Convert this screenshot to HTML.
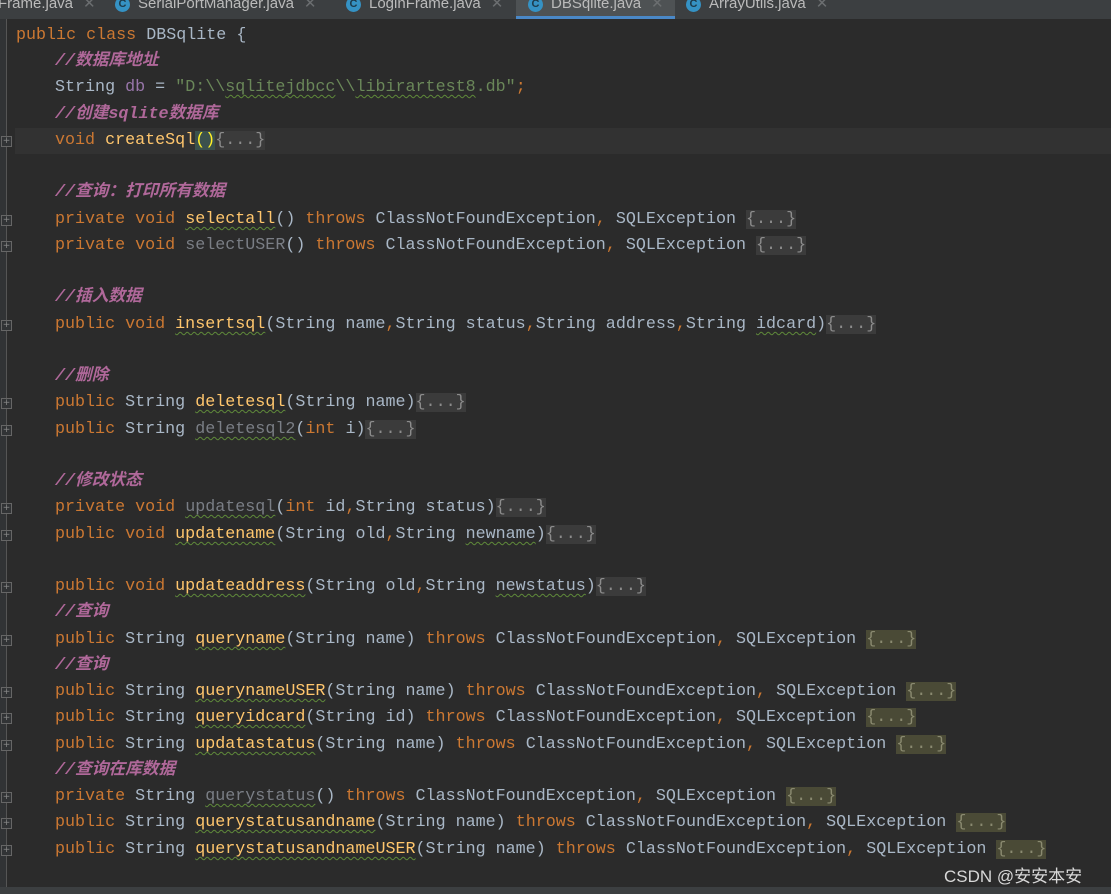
<!DOCTYPE html>
<html><head><meta charset="utf-8"><style>
body{margin:0;width:1111px;height:894px;background:#2b2b2b;overflow:hidden;position:relative;font-family:"Liberation Mono","Noto Sans CJK SC",monospace;}
.tabs{position:absolute;left:0;top:0;width:1111px;height:19px;background:#3c3f41;overflow:hidden;font-family:"Liberation Sans","Noto Sans CJK SC",sans-serif;font-size:15px;color:#bbb;}
.tab{position:absolute;top:-6px;height:25px;line-height:20px;white-space:nowrap}
.ci{display:inline-block;width:15px;height:15px;border-radius:50%;background:#3592c4;color:#1d3a4a;font-size:11px;line-height:15px;text-align:center;vertical-align:middle;margin-right:8px;font-weight:bold}
.x{color:#6b6e70;margin-left:10px}
.act{position:absolute;left:516px;top:0;width:159px;height:16px;background:#4e5254;border-bottom:3px solid #4a88c7}
.gut{position:absolute;left:0;top:19px;width:6px;height:868px;background:#313335;border-right:1px solid #555}
.bot{position:absolute;left:0;top:887px;width:1111px;height:7px;background:#3c3f41}
.cur{position:absolute;left:15px;top:128px;width:1096px;height:26px;background:#323232}
.l{position:absolute;left:15px;height:26px;line-height:26px;font-size:16.7px;color:#a9b7c6;white-space:pre}
.k{color:#cc7832}.m{color:#ffc66d;text-decoration:underline wavy #5f8a3a;text-underline-offset:3px;text-decoration-thickness:1px}
.g{color:#7a7e85;text-decoration:underline wavy #5f8a3a;text-underline-offset:3px;text-decoration-thickness:1px}
.s{color:#6a8759}.su{text-decoration:underline wavy #5f8a3a;text-underline-offset:3px;text-decoration-thickness:1px}
.v{color:#9876aa}.c{color:#b0689a;font-style:italic;font-weight:bold}
.f{background:#3b3b3b;color:#8c8c8c}.fy{background:#4a4a36;color:#8a8a70}
.fb{position:absolute;left:1px;width:9px;height:9px;border:1px solid #666;background:#313335;color:#888;font-size:9px;line-height:9px;text-align:center;font-family:"DejaVu Sans",sans-serif}
.u{text-decoration:underline wavy #5f8a3a;text-underline-offset:3px;text-decoration-thickness:1px}
.wm{position:absolute;left:944px;top:862px;font-family:"Liberation Sans","Noto Sans CJK SC",sans-serif;font-size:17px;color:#d8d8d8}
</style></head><body>
<div class="tabs">
<div class="act"></div>
<div class="tab" style="left:-2px">Frame.java<span class="x">✕</span></div>
<div class="tab" style="left:115px"><span class="ci">C</span>SerialPortManager.java<span class="x">✕</span></div>
<div class="tab" style="left:346px"><span class="ci">C</span>LoginFrame.java<span class="x">✕</span></div>
<div class="tab" style="left:528px"><span class="ci">C</span>DBSqlite.java<span class="x">✕</span></div>
<div class="tab" style="left:686px"><span class="ci">C</span>ArrayUtils.java<span class="x">✕</span></div>
</div>
<div class="gut"></div>
<div class="cur"></div>
<div class="bot"></div>

<div class="l" style="left:16px;top:23px"><span class="k">public class </span>DBSqlite {</div>
<div class="l" style="left:55px;top:49px"><span class="c">//数据库地址</span></div>
<div class="l" style="left:55px;top:75px">String <span class="v">db</span> = <span class="s">"D:\\<span class="su">sqlitejdbcc</span>\\<span class="su">libirartest8</span>.db"</span><span class="k">;</span></div>
<div class="l" style="left:55px;top:102px"><span class="c">//创建sqlite数据库</span></div>
<div class="l" style="left:55px;top:128px"><span class="k">void </span><span class="m" style="text-decoration:none">createSql</span><span style="color:#ffef28;background:#3b514d">()</span><span class="f">{...}</span></div>

<div class="l" style="left:55px;top:180px"><span class="c">//查询：打印所有数据</span></div>
<div class="l" style="left:55px;top:207px"><span class="k">private void </span><span class="m">selectall</span>() <span class="k">throws </span>ClassNotFoundException<span class="k">, </span>SQLException <span class="f">{...}</span></div>
<div class="l" style="left:55px;top:233px"><span class="k">private void </span><span style="color:#7a7e85">selectUSER</span>() <span class="k">throws </span>ClassNotFoundException<span class="k">, </span>SQLException <span class="f">{...}</span></div>

<div class="l" style="left:55px;top:285px"><span class="c">//插入数据</span></div>
<div class="l" style="left:55px;top:312px"><span class="k">public void </span><span class="m">insertsql</span>(String name<span class="k">,</span>String status<span class="k">,</span>String address<span class="k">,</span>String <span class="u">idcard</span>)<span class="f">{...}</span></div>

<div class="l" style="left:55px;top:364px"><span class="c">//删除</span></div>
<div class="l" style="left:55px;top:390px"><span class="k">public </span>String <span class="m">deletesql</span>(String name)<span class="f">{...}</span></div>
<div class="l" style="left:55px;top:417px"><span class="k">public </span>String <span class="g">deletesql2</span>(<span class="k">int </span>i)<span class="f">{...}</span></div>

<div class="l" style="left:55px;top:469px"><span class="c">//修改状态</span></div>
<div class="l" style="left:55px;top:495px"><span class="k">private void </span><span class="g">updatesql</span>(<span class="k">int </span>id<span class="k">,</span>String status)<span class="f">{...}</span></div>
<div class="l" style="left:55px;top:522px"><span class="k">public void </span><span class="m">updatename</span>(String old<span class="k">,</span>String <span class="u">newname</span>)<span class="f">{...}</span></div>

<div class="l" style="left:55px;top:574px"><span class="k">public void </span><span class="m">updateaddress</span>(String old<span class="k">,</span>String <span class="u">newstatus</span>)<span class="f">{...}</span></div>
<div class="l" style="left:55px;top:600px"><span class="c">//查询</span></div>
<div class="l" style="left:55px;top:627px"><span class="k">public </span>String <span class="m">queryname</span>(String name) <span class="k">throws </span>ClassNotFoundException<span class="k">, </span>SQLException <span class="fy">{...}</span></div>
<div class="l" style="left:55px;top:653px"><span class="c">//查询</span></div>
<div class="l" style="left:55px;top:679px"><span class="k">public </span>String <span class="m">querynameUSER</span>(String name) <span class="k">throws </span>ClassNotFoundException<span class="k">, </span>SQLException <span class="fy">{...}</span></div>
<div class="l" style="left:55px;top:705px"><span class="k">public </span>String <span class="m">queryidcard</span>(String id) <span class="k">throws </span>ClassNotFoundException<span class="k">, </span>SQLException <span class="fy">{...}</span></div>
<div class="l" style="left:55px;top:732px"><span class="k">public </span>String <span class="m">updatastatus</span>(String name) <span class="k">throws </span>ClassNotFoundException<span class="k">, </span>SQLException <span class="fy">{...}</span></div>
<div class="l" style="left:55px;top:758px"><span class="c">//查询在库数据</span></div>
<div class="l" style="left:55px;top:784px"><span class="k">private </span>String <span class="g">querystatus</span>() <span class="k">throws </span>ClassNotFoundException<span class="k">, </span>SQLException <span class="fy">{...}</span></div>
<div class="l" style="left:55px;top:810px"><span class="k">public </span>String <span class="m">querystatusandname</span>(String name) <span class="k">throws </span>ClassNotFoundException<span class="k">, </span>SQLException <span class="fy">{...}</span></div>
<div class="l" style="left:55px;top:837px"><span class="k">public </span>String <span class="m">querystatusandnameUSER</span>(String name) <span class="k">throws </span>ClassNotFoundException<span class="k">, </span>SQLException <span class="fy">{...}</span></div>

<div class="fb" style="top:136px">+</div>
<div class="fb" style="top:215px">+</div>
<div class="fb" style="top:241px">+</div>
<div class="fb" style="top:320px">+</div>
<div class="fb" style="top:398px">+</div>
<div class="fb" style="top:425px">+</div>
<div class="fb" style="top:503px">+</div>
<div class="fb" style="top:530px">+</div>
<div class="fb" style="top:582px">+</div>
<div class="fb" style="top:635px">+</div>
<div class="fb" style="top:687px">+</div>
<div class="fb" style="top:713px">+</div>
<div class="fb" style="top:740px">+</div>
<div class="fb" style="top:792px">+</div>
<div class="fb" style="top:818px">+</div>
<div class="fb" style="top:845px">+</div>

<div class="wm">CSDN @安安本安</div>
</body></html>
